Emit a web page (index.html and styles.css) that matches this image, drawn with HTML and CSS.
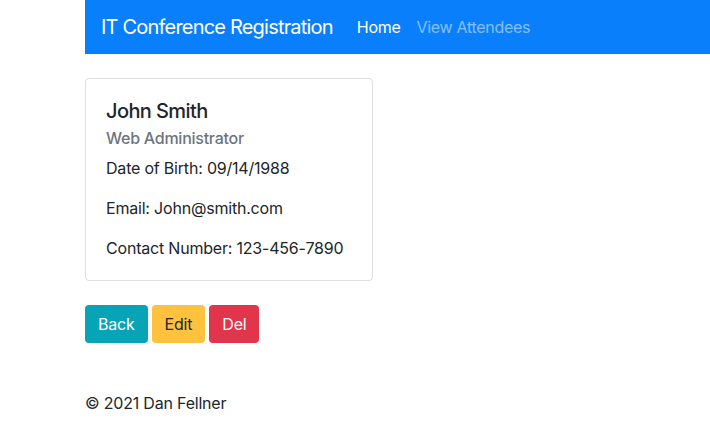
FILE: index.html
```html
<!DOCTYPE html>
<html lang="en">
<head>
<meta charset="utf-8">
<title>IT Conference Registration</title>
<link rel="stylesheet" href="styles.css">
</head>
<body>
<div class="page">
  <nav class="navbar">
    <a class="brand" href="#">IT Conference Registration</a>
    <ul class="nav">
      <li><a class="nav-link active" href="#">Home</a></li>
      <li><a class="nav-link" href="#">View Attendees</a></li>
    </ul>
  </nav>
  <div class="container">
    <div class="card">
      <h5 class="card-title">John Smith</h5>
      <h6 class="card-subtitle">Web Administrator</h6>
      <p class="card-text">Date of Birth: 09/14/1988</p>
      <p class="card-text">Email: John@smith.com</p>
      <p class="card-text">Contact Number: 123-456-7890</p>
    </div>
    <div class="actions">
      <a class="btn btn-info" href="#">Back</a>
      <a class="btn btn-warning" href="#">Edit</a>
      <a class="btn btn-danger" href="#">Del</a>
    </div>
    <footer class="footer">&copy; 2021 Dan Fellner</footer>
  </div>
</div>
</body>
</html>
```

FILE: styles.css
```css
* { box-sizing: border-box; }
html, body { margin: 0; padding: 0; }
body {
  font-family: Inter, "Noto Sans", "Liberation Sans", sans-serif;
  font-size: 16px;
  line-height: 1.5;
  color: #212529;
  background: #fff;
  letter-spacing: -0.2px;
}
.page { padding-left: 85px; }
.navbar {
  display: flex;
  align-items: center;
  background: #0a7ffc;
  height: 54px;
  padding: 0 16px;
}
.brand {
  color: #fff;
  text-decoration: none;
  font-size: 20px;
  letter-spacing: -0.8px;
  margin-right: 16px;
}
.nav { display: flex; list-style: none; margin: 0; padding: 0; }
.nav-link {
  display: block;
  padding: 8px;
  color: rgba(255,255,255,.5);
  text-decoration: none;
  letter-spacing: -0.3px;
}
.nav-link.active { color: #fff; }
.container { width: 540px; }
.card {
  margin-top: 24px;
  width: 288px;
  border: 1px solid rgba(0,0,0,.125);
  border-radius: 4px;
  padding: 20px;
}
.card-title {
  margin: 0 0 12px;
  font-size: 20px;
  font-weight: 500;
  line-height: 1.2;
  letter-spacing: -0.6px;
}
.card-subtitle {
  margin: -6px 0 8px;
  font-size: 16px;
  font-weight: 500;
  line-height: 1.2;
  color: #6c757d;
  letter-spacing: -0.25px;
}
.card-text { margin: 0 0 16px; }
.card-text:last-child { margin-bottom: 0; }
.actions { display: flex; gap: 4px; margin-top: 24px; }
.btn {
  display: inline-block;
  padding: 6px 12px;
  border-radius: 4px;
  text-decoration: none;
  line-height: 24px;
  border: 1px solid transparent;
}
.btn-info { background: #07a4b7; color: #fff; }
.btn-warning { background: #ffc23f; color: #212529; }
.btn-danger { background: #e2344a; color: #fff; }
.footer { margin-top: 48px; }
```
